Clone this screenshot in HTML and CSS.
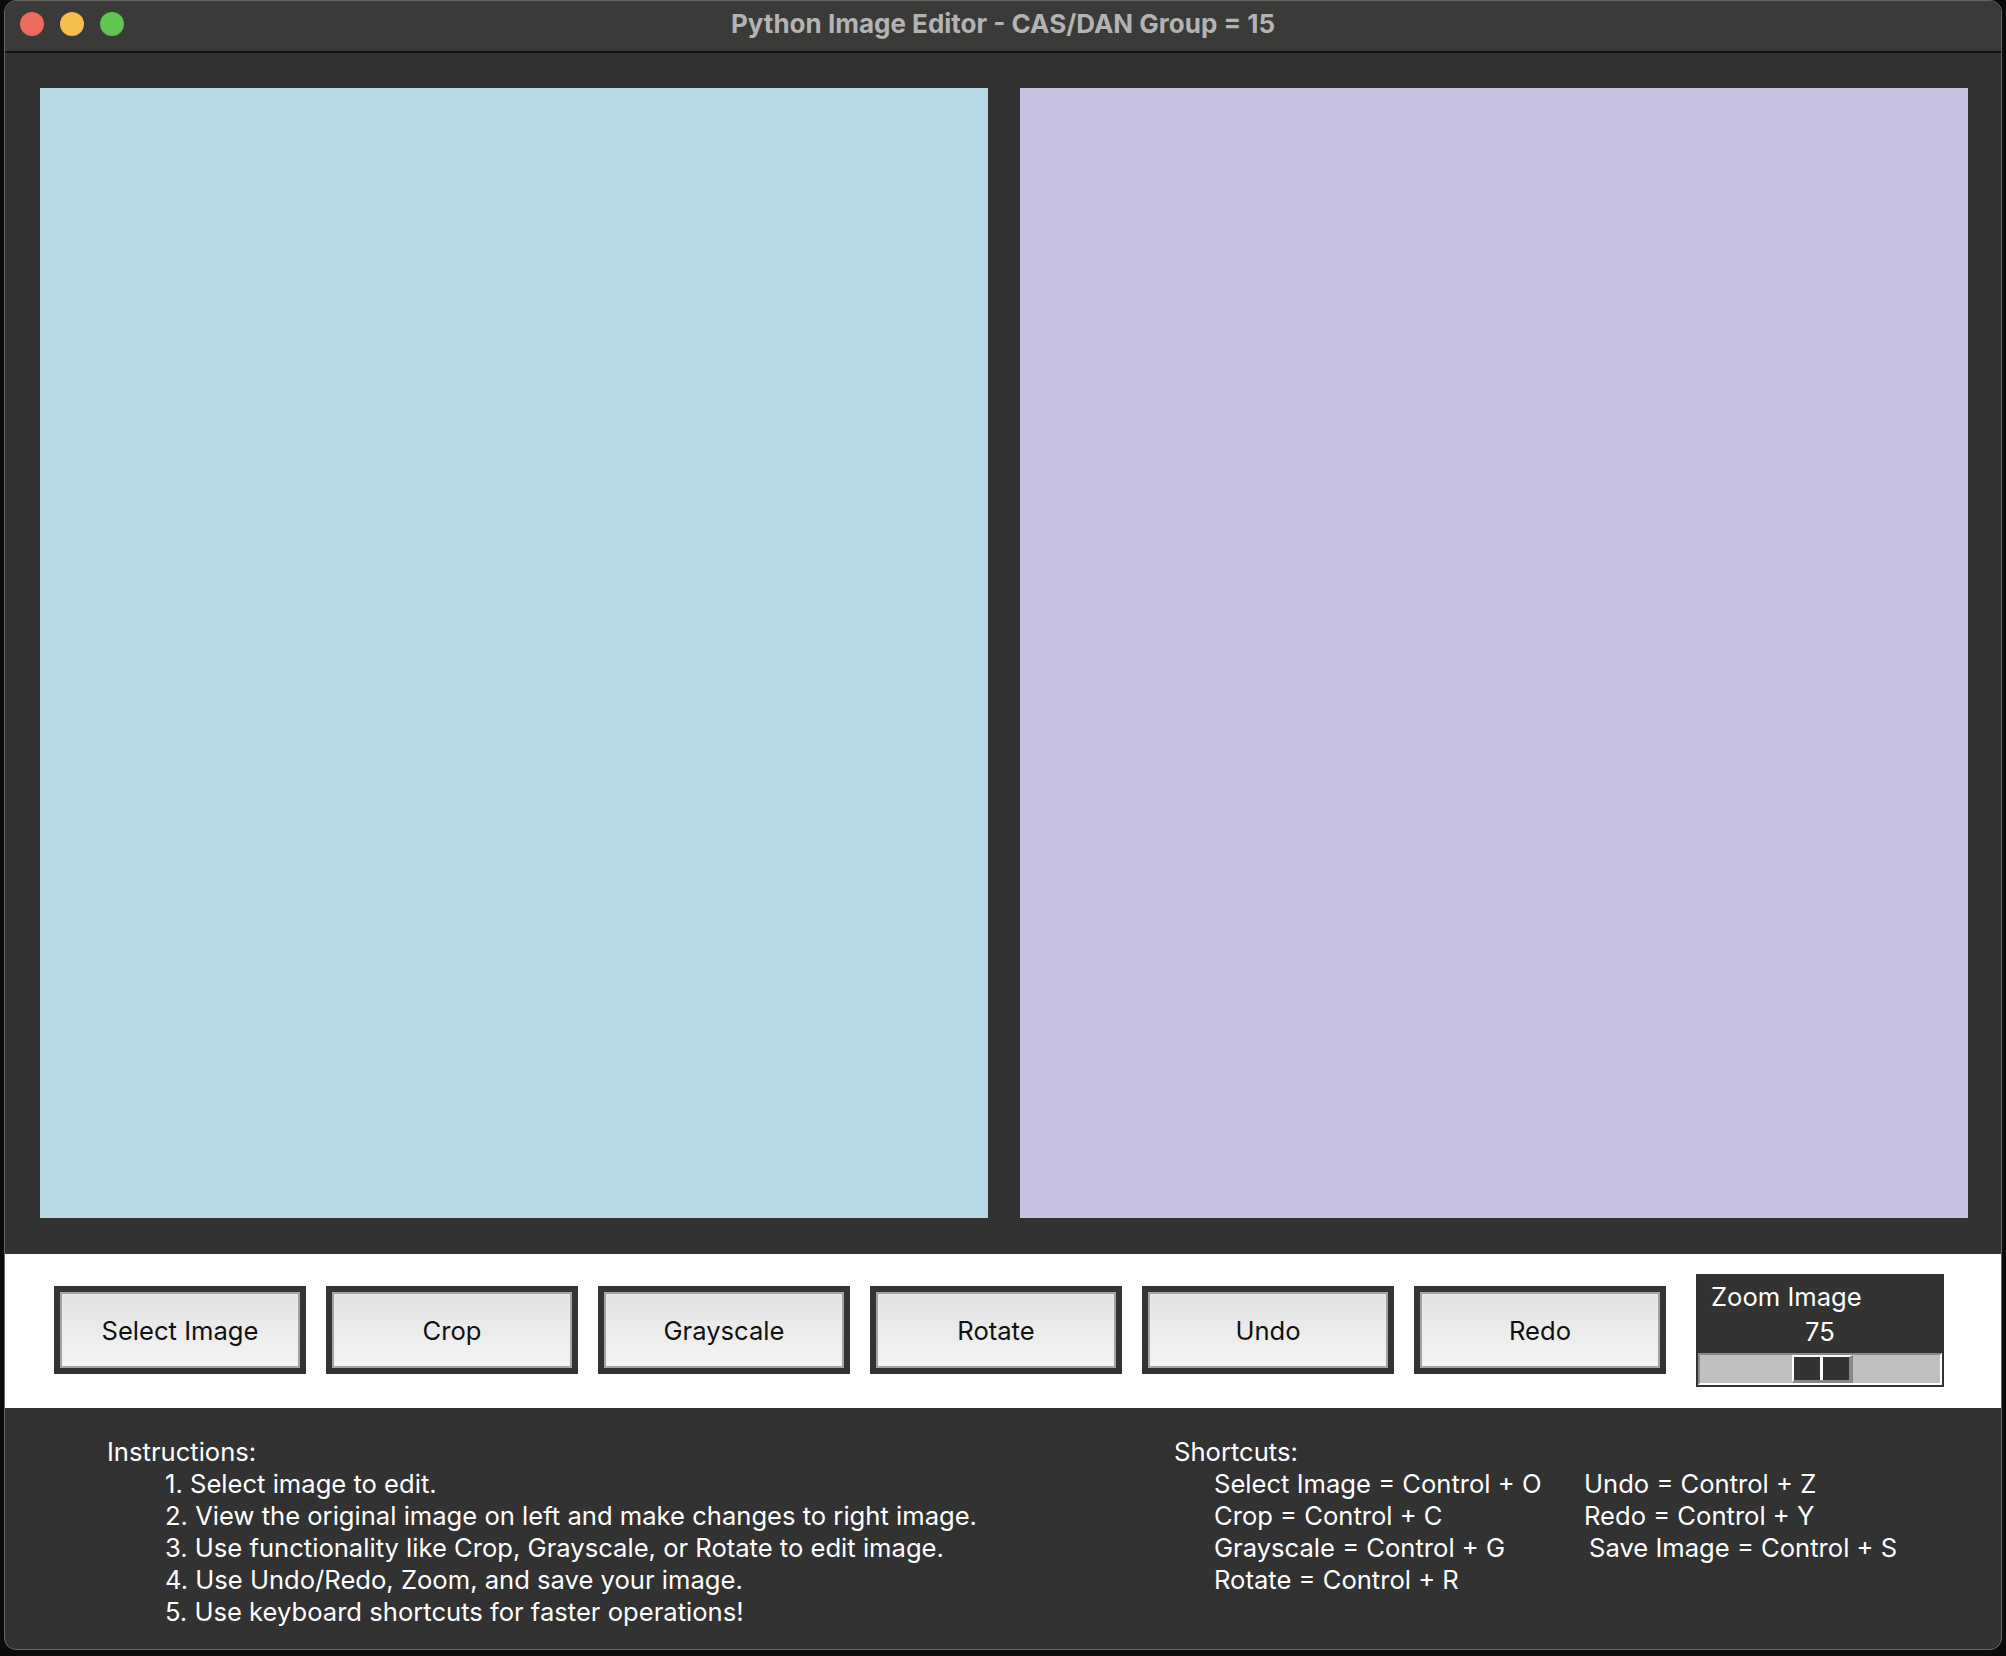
FILE: index.html
```html
<!DOCTYPE html>
<html lang="en">
<head>
    <meta charset="UTF-8">
    <title>Python Image Editor - CAS/DAN Group = 15</title>
    <link rel="stylesheet" href="styles.css">
</head>
<body>
    <div class="window">
        <div class="titlebar">
            <div class="lights">
                <span class="light red"></span>
                <span class="light yellow"></span>
                <span class="light green"></span>
            </div>
            <div class="title">Python Image Editor - CAS/DAN Group = 15</div>
            <div></div>
        </div>

        <div class="canvas-area">
            <div class="image-panel original"></div>
            <div class="image-panel edited"></div>
        </div>

        <div class="toolbar">
            <button class="tool-btn">Select Image</button>
            <button class="tool-btn">Crop</button>
            <button class="tool-btn">Grayscale</button>
            <button class="tool-btn">Rotate</button>
            <button class="tool-btn">Undo</button>
            <button class="tool-btn">Redo</button>
            <div class="zoom-box">
                <div class="zoom-label">Zoom Image</div>
                <div class="zoom-value">75</div>
                <div class="trough">
                    <div class="handle">
                        <span class="grip"></span>
                        <span class="grip"></span>
                    </div>
                </div>
            </div>
        </div>

        <div class="help">
            <div class="instructions">
                <div class="help-title">Instructions:</div>
                <div class="help-list">
                    <div>1. Select image to edit.</div>
                    <div>2. View the original image on left and make changes to right image.</div>
                    <div>3. Use functionality like Crop, Grayscale, or Rotate to edit image.</div>
                    <div>4. Use Undo/Redo, Zoom, and save your image.</div>
                    <div>5. Use keyboard shortcuts for faster operations!</div>
                </div>
            </div>
            <div class="shortcuts">
                <div class="help-title">Shortcuts:</div>
                <div class="shortcut-grid">
                    <div>Select Image = Control + O</div>
                    <div>Undo = Control + Z</div>
                    <div>Crop = Control + C</div>
                    <div>Redo = Control + Y</div>
                    <div>Grayscale = Control + G</div>
                    <div class="nudge">Save Image = Control + S</div>
                    <div>Rotate = Control + R</div>
                </div>
            </div>
        </div>
    </div>
</body>
</html>
```

FILE: styles.css
```css
body {
    margin: 0;
    width: 2006px;
    height: 1656px;
    background-color: #0b0b0b;
    font-family: Inter, Roboto, "Liberation Sans", Arial, sans-serif;
    overflow: hidden;
}
.window {
    margin-left: 4px;
    width: 1998px;
    height: 1650px;
    box-sizing: border-box;
    border: 1px solid #666;
    border-radius: 12px;
    overflow: hidden;
    display: flex;
    flex-direction: column;
    background-color: #323232;
}
.titlebar {
    height: 52px;
    box-sizing: border-box;
    padding-top: 11px;
    background-color: #3a3a39;
    border-bottom: 2px solid #121212;
    display: grid;
    grid-template-columns: 1fr auto 1fr;
    align-items: start;
}
.lights {
    display: flex;
    gap: 16px;
    padding-left: 15px;
}
.light {
    width: 24px;
    height: 24px;
    border-radius: 50%;
}
.red { background-color: #ee6a5f; }
.yellow { background-color: #f5bf4f; }
.green { background-color: #61c554; }
.title {
    color: #b3b3b3;
    font-size: 26px;
    line-height: 24px;
    font-weight: 700;
}
.canvas-area {
    display: grid;
    grid-template-columns: 948px 948px;
    gap: 32px;
    padding: 35px 33px 36px 35px;
}
.image-panel {
    height: 1130px;
}
.original { background-color: #b5d8e3; }
.edited { background-color: #c9c3e1; }
.toolbar {
    height: 154px;
    box-sizing: border-box;
    background-color: #ffffff;
    display: flex;
    align-items: flex-start;
    padding: 20px 0 0 49px;
}
.tool-btn {
    width: 252px;
    height: 88px;
    margin: 12px 20px 0 0;
    box-sizing: border-box;
    border: 6px solid #333333;
    box-shadow: inset 0 0 0 2px #a4a4a4;
    background: linear-gradient(#e3e3e3, #f4f4f4);
    font-family: inherit;
    font-size: 25.6px;
    color: #111;
    padding: 0;
}
.zoom-box {
    width: 248px;
    height: 113px;
    margin-left: 10px;
    box-sizing: border-box;
    background-color: #333333;
    color: #ffffff;
    font-size: 25.6px;
    padding: 2px;
    display: flex;
    flex-direction: column;
}
.zoom-label {
    padding: 6px 0 0 13px;
    line-height: 30px;
}
.zoom-value {
    text-align: center;
    line-height: 30px;
    margin: 5px 0 6px;
}
.trough {
    height: 32px;
    box-sizing: border-box;
    background-color: #c0c0c0;
    border-top: 2px solid #8a8a8a;
    border-left: 2px solid #8a8a8a;
    border-bottom: 2px solid #ffffff;
    border-right: 2px solid #ffffff;
    padding-left: 92px;
}
.handle {
    width: 61px;
    height: 28px;
    box-sizing: border-box;
    border-top: 2px solid #ffffff;
    border-left: 2px solid #ffffff;
    border-bottom: 3px solid #888888;
    border-right: 4px solid #888888;
    display: flex;
    gap: 3px;
    background-color: #ffffff;
}
.grip {
    flex: 1;
    background-color: #333333;
}
.help {
    flex: 1;
    display: flex;
    padding: 28px 0 0 102px;
    color: #ffffff;
    font-size: 25.6px;
    line-height: 32px;
}
.instructions {
    width: 1067px;
}
.help-list {
    padding-left: 58px;
}
.shortcut-grid {
    display: grid;
    grid-template-columns: 370px auto;
    padding-left: 40px;
}
.nudge {
    padding-left: 5px;
}
```
